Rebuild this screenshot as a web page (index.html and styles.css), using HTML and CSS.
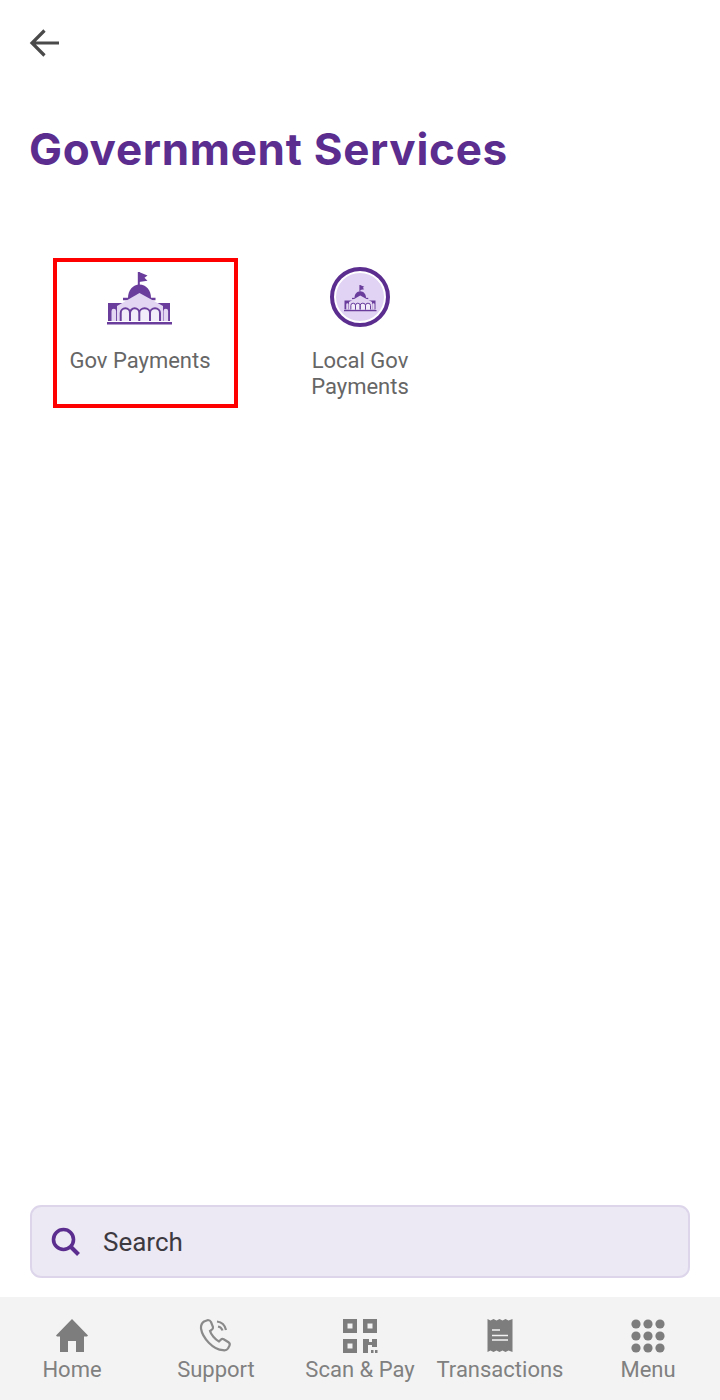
FILE: index.html
```html
<!DOCTYPE html>
<html lang="en">
<head>
  <meta charset="UTF-8" />
  <meta name="viewport" content="width=device-width, initial-scale=1.0"/>
  <title>Government Services</title>
  <link rel="stylesheet" href="styles.css">
</head>
<body>

  <svg class="sprites" width="0" height="0">
    <symbol id="building" viewBox="0 0 66 60">
      <path class="dark" d="M30.800 6h2v13h-2z"/>
      <path class="dark" d="M32 6l8.500 3.500-3 2.200 3 3-8.500 1.300z"/>
      <path class="dark" d="M21 32c0-8 5-13.500 11.500-13.500S44 24 44 32z"/>
      <path class="dark" d="M16 31.700h32.500v2.600H16z"/>
      <path class="dark" d="M1 37h62v18H1z"/>
      <path class="light" d="M32.500 27L56 40v15H10V40z"/>
      <path class="light" d="M4.500 55V45a2.300 2.300 0 0 1 4.600 0V55zM56.500 55V45a2.300 2.300 0 0 1 4.600 0V55z"/>
      <path class="arches" d="M13.700 55V47a4.650 4.650 0 0 1 9.300 0V55M23 55V47a4.650 4.650 0 0 1 9.300 0V55M32.300 55V47a5.350 4.650 0 0 1 10.700 0V55M43 55V47a5 4.650 0 0 1 10 0V55"/>
      <path class="dark" d="M0 56h65v2.600H0z"/>
    </symbol>
  </svg>

  <div class="page">
    <header class="topbar">
      <button class="back-btn" aria-label="Back">
        <svg width="32" height="30" viewBox="0 0 32 30"><path d="M30 15H3M15.500 2.500L3 15l12.500 12.500" fill="none" stroke="#4a4a4a" stroke-width="3.200"/></svg>
      </button>
      <h1>Government Services</h1>
    </header>

    <main class="services">
      <div class="service">
        <svg class="service-icon" width="66" height="60"><use href="#building"/></svg>
        <span>Gov Payments</span>
        <div class="highlight"></div>
      </div>
      <div class="service">
        <div class="round-icon">
          <svg width="33" height="30"><use href="#building"/></svg>
        </div>
        <span>Local Gov<br>Payments</span>
      </div>
    </main>

    <div class="search">
      <svg width="30" height="30" viewBox="0 0 30 30"><circle cx="12.500" cy="12.500" r="10" fill="none" stroke="#5b2d8e" stroke-width="3.600"/><path d="M19.500 19.500l8 8" stroke="#5b2d8e" stroke-width="4"/></svg>
      <span>Search</span>
    </div>

    <nav class="tabbar">
      <a class="tab">
        <svg width="36" height="36" viewBox="0 0 36 36"><path d="M18 1L34 17.500l-1 1H30V34H22V23H14V34H6V18.500H3l-1-1z" fill="#7d7d7d"/></svg>
        <span>Home</span>
      </a>
      <a class="tab">
        <svg width="36" height="36" viewBox="0 0 36 36" fill="none" stroke="#8a8a8a" stroke-width="2.200"><path d="M6 3.500l4-1.500c1.500 0 2.500 1 3 2l2 5c.3 1.200-.5 2.200-1.500 3l-1.500 1c1 3.500 5 8.500 9 10.500l1.500-1.500c1-1 2.200-1.300 3.200-.8l4.800 3c1.300.8 1.500 2 1 3.300l-1.500 3c-1 1.500-3 2-5 1.700C15 31.500 4.500 20 3 10.500 2.800 7.500 3.800 5 6 3.500z"/><path d="M19 3.500c4.500.5 8 4 9 8.500M20 8.500c2.300.5 3.800 2 4.500 4"/></svg>
        <span>Support</span>
      </a>
      <a class="tab">
        <svg width="36" height="36" viewBox="0 0 36 36" fill="#7d7d7d">
          <path fill-rule="evenodd" d="M1 1h14v14H1zM5.500 5.500v5h5v-5zM21 1h14v14H21zM25.500 5.500v5h5v-5zM1 21h14v14H1zM5.500 25.500v5h5v-5z"/>
          <path d="M21 21h6v3h3v-3h5v8h-5v-2h-4v8h-5z"/>
          <path d="M29 32h2.500v3H29zM33 32h2.500v3H33z"/>
        </svg>
        <span>Scan &amp; Pay</span>
      </a>
      <a class="tab tab-wide">
        <svg width="36" height="36" viewBox="0 0 36 36"><path d="M5.500 1l3 1.500L11.500 1l3 1.500L17.500 1l3 1.500L23.500 1l3 1.500L30.500 1v33l-4-1.500L23.500 34l-3-1.500-3 1.500-3-1.500-3 1.500-3-1.500-3 1.500z" fill="#7d7d7d"/><path d="M10 12h8M10 17.500h16M10 22h16" stroke="#f3f3f3" stroke-width="1.500"/></svg>
        <span>Transactions</span>
      </a>
      <a class="tab">
        <svg width="36" height="36" viewBox="0 0 36 36" fill="#7d7d7d">
          <circle cx="6" cy="6" r="4.600"/><circle cx="18" cy="6" r="4.600"/><circle cx="30" cy="6" r="4.600"/>
          <circle cx="6" cy="18" r="4.600"/><circle cx="18" cy="18" r="4.600"/><circle cx="30" cy="18" r="4.600"/>
          <circle cx="6" cy="30" r="4.600"/><circle cx="18" cy="30" r="4.600"/><circle cx="30" cy="30" r="4.600"/>
        </svg>
        <span>Menu</span>
      </a>
    </nav>
  </div>

</body>
</html>
```

FILE: styles.css
```css
:root {
  --purple: #5b2d8e;
  --building-dark: #6a3d9c;
  --building-light: #e2d6f3;
  --text-grey: #666666;
  --tab-grey: #808080;
}

body {
  margin: 0;
  background: #ffffff;
  font-family: Roboto, 'Liberation Sans', sans-serif;
}

.sprites {
  position: absolute;
}

.dark {
  fill: var(--building-dark);
}

.light {
  fill: var(--building-light);
}

.arches {
  fill: #f1ebfa;
  stroke: var(--building-dark);
  stroke-width: 2;
}

.page {
  height: 1400px;
  display: flex;
  flex-direction: column;
  overflow: hidden;
}

.topbar {
  padding: 28px 29px 0;
}

.back-btn {
  display: block;
  padding: 0;
  border: none;
  background: none;
  height: 30px;
}

h1 {
  margin: 64px 0 0;
  font-family: Inter, 'Liberation Sans', sans-serif;
  font-size: 44px;
  line-height: 54px;
  font-weight: 700;
  letter-spacing: 0.7px;
  color: var(--purple);
}

.services {
  flex: 1;
  display: grid;
  grid-template-columns: 220px 220px;
  align-content: start;
  padding: 94px 30px 0;
}

.service {
  position: relative;
  display: flex;
  flex-direction: column;
  align-items: center;
  text-align: center;
  font-size: 22px;
  line-height: 26px;
  color: var(--text-grey);
}

.service-icon {
  margin: -5px 0 22px;
  padding-top: 1px;
}

.service span {
  display: block;
}

.highlight {
  position: absolute;
  left: 23px;
  top: -12px;
  width: 185px;
  height: 150px;
  box-sizing: border-box;
  border: 4px solid #ff0000;
}

.round-icon {
  width: 60px;
  height: 60px;
  margin: -3px 0 21px;
  box-sizing: border-box;
  border: 4px solid var(--purple);
  border-radius: 50%;
  background: #e0d3f3;
  box-shadow: inset 0 0 0 2px #ffffff;
  display: flex;
  align-items: center;
  justify-content: center;
}

.search {
  margin: 0 30px 19px;
  height: 73px;
  box-sizing: border-box;
  display: flex;
  align-items: center;
  gap: 22px;
  padding-left: 19px;
  background: #ece8f4;
  border: 2px solid #ddd6eb;
  border-radius: 11px;
  font-size: 26px;
  color: #3c3a40;
}

.tabbar {
  height: 103px;
  box-sizing: border-box;
  display: grid;
  grid-template-columns: repeat(5, 1fr);
  padding-top: 21px;
  background: #f3f3f3;
}

.tab {
  display: flex;
  flex-direction: column;
  align-items: center;
  font-size: 22px;
  line-height: 26px;
  color: var(--tab-grey);
}

.tab span {
  margin-top: 3px;
  white-space: nowrap;
}

.tab-wide {
  margin-right: 8px;
}
```
